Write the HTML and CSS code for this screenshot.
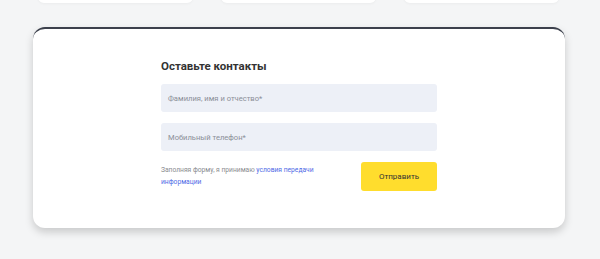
FILE: index.html
```html
<!DOCTYPE html>
<html lang="ru">
<head>
<meta charset="utf-8">
<title>Оставьте контакты</title>
<link rel="stylesheet" href="styles.css">
</head>
<body>
<div class="tiles">
  <div class="tile"></div>
  <div class="tile"></div>
  <div class="tile"></div>
</div>
<section class="card">
  <form class="form">
    <h2 class="title">Оставьте контакты</h2>
    <div class="field"><span class="placeholder">Фамилия, имя и отчество*</span></div>
    <div class="field"><span class="placeholder">Мобильный телефон*</span></div>
    <div class="footer">
      <p class="agree">Заполняя форму, я принимаю <a href="#" class="link">условия передачи информации</a></p>
      <button type="button" class="submit">Отправить</button>
    </div>
  </form>
</section>
</body>
</html>
```

FILE: styles.css
```css
html, body {
  margin: 0;
  padding: 0;
}
body {
  background: #f4f5f6;
  font-family: Roboto, "Liberation Sans", Arial, sans-serif;
  width: 600px;
  height: 259px;
  overflow: hidden;
}
.tiles {
  display: flex;
  gap: 28px;
  padding-left: 38px;
  margin-top: -17px;
  height: 20px;
}
.tile {
  width: 155px;
  height: 20px;
  background: #fff;
  border-radius: 6px;
  box-shadow: 0 1px 3px rgba(0, 0, 0, 0.04);
}
.card {
  margin: 24px 0 0 33px;
  width: 532px;
  box-sizing: border-box;
  background: #fff;
  border-top: 2px solid #3c404c;
  border-radius: 12px;
  box-shadow: 0 4px 8px rgba(0, 0, 0, 0.18);
  padding: 30px 0 37px;
}
.form {
  width: 276px;
  margin: 0 auto;
  display: flex;
  flex-direction: column;
}
.title {
  margin: 0 0 11px;
  font-size: 11.5px;
  line-height: 14px;
  font-weight: 700;
  color: #333333;
}
.field {
  height: 28px;
  background: #edf0f7;
  border-radius: 3px;
  display: flex;
  align-items: center;
  padding: 0 7px;
  margin-bottom: 11px;
}
.placeholder {
  font-size: 7.6px;
  color: #8b8f98;
}
.footer {
  display: flex;
  justify-content: space-between;
  align-items: center;
}
.agree {
  margin: 0;
  width: 180px;
  font-size: 6.7px;
  line-height: 11.4px;
  color: #8a8c90;
}
.link {
  color: #4f6ae6;
  text-decoration: none;
}
.submit {
  width: 76px;
  height: 29px;
  border: none;
  border-radius: 3px;
  background: #ffdd2d;
  color: #333333;
  font-family: inherit;
  font-size: 8px;
  padding: 0;
}
```
